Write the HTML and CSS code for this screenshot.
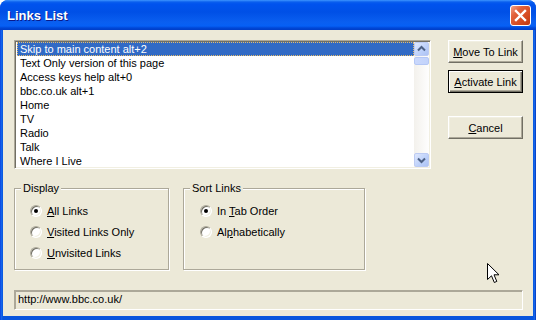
FILE: index.html
```html
<!DOCTYPE html>
<html lang="en">
<head>
    <meta charset="UTF-8">
    <title>Links List</title>
    <link rel="stylesheet" href="styles.css">
</head>
<body>
<div class="Window">
    <div class="TitleBar">
        <span class="TitleText">Links List</span>
        <button class="CloseButton" type="button">
            <svg width="19" height="19" viewBox="0 0 19 19">
                <path d="M5 5 L14 14 M14 5 L5 14" stroke="#fff" stroke-width="2.4" stroke-linecap="square" fill="none"/>
            </svg>
        </button>
    </div>
    <div class="Client">
        <div class="TopRow">
            <div class="ListBox">
                <ul class="LinkItems">
                    <li class="Selected">Skip to main content alt+2</li>
                    <li>Text Only version of this page</li>
                    <li>Access keys help alt+0</li>
                    <li>bbc.co.uk alt+1</li>
                    <li>Home</li>
                    <li>TV</li>
                    <li>Radio</li>
                    <li>Talk</li>
                    <li>Where I Live</li>
                </ul>
                <div class="ScrollBar">
                    <div class="ScrollButton">
                        <svg width="15" height="14" viewBox="0 0 15 14">
                            <path d="M4 8.5 L7.5 5 L11 8.5" stroke="#4d6185" stroke-width="2" fill="none"/>
                        </svg>
                    </div>
                    <div class="ScrollThumb"></div>
                    <div class="ScrollTrack"></div>
                    <div class="ScrollButton">
                        <svg width="15" height="14" viewBox="0 0 15 14">
                            <path d="M4 5.5 L7.5 9 L11 5.5" stroke="#4d6185" stroke-width="2" fill="none"/>
                        </svg>
                    </div>
                </div>
            </div>
            <div class="ButtonColumn">
                <button class="DialogButton" type="button"><u>M</u>ove To Link</button>
                <button class="DialogButton DefaultButton" type="button"><u>A</u>ctivate Link</button>
                <button class="DialogButton CancelButton" type="button"><u>C</u>ancel</button>
            </div>
        </div>
        <div class="GroupRow">
            <fieldset class="GroupBox DisplayGroup">
                <legend>Display</legend>
                <div class="RadioList">
                    <label class="RadioOption"><span class="Radio Checked"></span><span><u>A</u>ll Links</span></label>
                    <label class="RadioOption"><span class="Radio"></span><span><u>V</u>isited Links Only</span></label>
                    <label class="RadioOption"><span class="Radio"></span><span><u>U</u>nvisited Links</span></label>
                </div>
            </fieldset>
            <fieldset class="GroupBox SortGroup">
                <legend>Sort Links</legend>
                <div class="RadioList">
                    <label class="RadioOption"><span class="Radio Checked"></span><span>In <u>T</u>ab Order</span></label>
                    <label class="RadioOption"><span class="Radio"></span><span>Al<u>p</u>habetically</span></label>
                </div>
            </fieldset>
        </div>
        <div class="StatusField">http://www.bbc.co.uk/</div>
    </div>
    <!-- pointer sitting over the dialog -->
    <svg class="MouseCursor" width="13" height="21" viewBox="0 0 13 21">
        <path d="M0.5 0.5 L0.5 16.5 L4.5 12.8 L7.3 19.5 L9.8 18.4 L7 11.8 L12 11.8 Z" fill="#fff" stroke="#000" stroke-width="1"/>
    </svg>
</div>
</body>
</html>
```

FILE: styles.css
```css
body {
    margin: 0;
    background: #fff;
    font-family: "Liberation Sans", Arial, sans-serif;
    font-size: 11px;
}

.Window {
    position: relative;
    width: 536px;
    height: 320px;
    background: linear-gradient(90deg, #0831d9 0, #166aee 1px, #0855dd 3px, #0855dd 533px, #166aee 535px, #001ea0 536px);
    border-radius: 8px 8px 0 0;
    overflow: hidden;
}

.TitleBar {
    display: flex;
    align-items: flex-start;
    height: 30px;
    box-sizing: border-box;
    padding: 5px 5px 0 7px;
    background: linear-gradient(180deg, #3d95ff 0, #0a5fee 2px, #0053ee 4px, #0050e6 12px, #0a5ff0 22px, #0660f5 26px, #0047d6 28px, #003dc7 30px);
}

.TitleText {
    color: #fff;
    font-weight: bold;
    font-size: 13px;
    line-height: 21px;
    text-shadow: 1px 1px #0a1a8a;
}

.CloseButton {
    margin-left: auto;
    width: 21px;
    height: 21px;
    padding: 0;
    display: flex;
    align-items: center;
    justify-content: center;
    border: 1px solid #fff;
    border-radius: 3px;
    background: linear-gradient(135deg, #f2a48c 0, #e2623c 30%, #d64c22 65%, #c03810 100%);
}

.Client {
    height: 286px;
    margin: 0 3px;
    box-sizing: border-box;
    padding: 10px 0 0 11px;
    background: #ece9d8;
}

.TopRow {
    display: flex;
}

.ListBox {
    display: flex;
    width: 417px;
    height: 129px;
    box-sizing: border-box;
    border: 1px solid;
    border-color: #aca899 #fff #fff #aca899;
    box-shadow: inset 1px 1px #716f64, inset -1px -1px #f1efe2;
    padding: 1px;
    background: #fff;
}

.LinkItems {
    flex: 1;
    margin: 0;
    padding: 0 0 0 1px;
    list-style: none;
    overflow: hidden;
}

.LinkItems li {
    height: 12px;
    line-height: 12px;
    padding-left: 2px;
    border: 1px solid transparent;
    color: #000;
    white-space: nowrap;
}

.LinkItems li.Selected {
    background: #316ac5;
    color: #fff;
    border: 1px dotted #e4bb6a;
}

.ScrollBar {
    display: flex;
    flex-direction: column;
    width: 15px;
    background: linear-gradient(90deg, #f3f1ec, #fefefe);
}

.ScrollButton {
    height: 14px;
    box-sizing: border-box;
    border: 1px solid #bccbf3;
    border-radius: 2px;
    background: linear-gradient(135deg, #dfe8fd, #bcd0fa 60%, #adc3f4);
}

.ScrollButton svg {
    display: block;
    margin: -1px;
}

.ScrollThumb {
    height: 8px;
    margin-top: 1px;
    box-sizing: border-box;
    border: 1px solid #b4c7f5;
    border-radius: 2px;
    background: linear-gradient(90deg, #cad8fc, #c2d3fb);
}

.ScrollTrack {
    flex: 1;
}

.ButtonColumn {
    display: flex;
    flex-direction: column;
    margin-left: 17px;
}

.DialogButton {
    width: 75px;
    height: 23px;
    padding: 0;
    font-family: "Liberation Sans", Arial, sans-serif;
    font-size: 11px;
    color: #000;
    background: #ece9d8;
    border: 1px solid;
    border-color: #fff #716f64 #716f64 #fff;
    box-shadow: inset -1px -1px #aca899, inset 1px 1px #f1efe2;
}

.DialogButton.DefaultButton {
    margin-top: 7px;
    border: 1px solid #000;
    box-shadow: inset 1px 1px #fff, inset -1px -1px #716f64, inset -2px -2px #aca899;
}

.DialogButton.CancelButton {
    margin-top: 23px;
}

.GroupRow {
    display: flex;
    gap: 14px;
    margin-top: 13px;
}

.GroupBox {
    margin: 0;
    height: 88px;
    box-sizing: border-box;
    padding: 5px 0 0 0;
    border: 1px solid #aca899;
    box-shadow: inset 1px 1px #fff, 1px 1px #fff;
}

.GroupBox legend {
    padding: 0 2px;
    margin-left: 6px;
    line-height: 13px;
    background: #ece9d8;
    color: #000;
}

.DisplayGroup {
    width: 155px;
}

.DisplayGroup .RadioList {
    padding-left: 15px;
}

.SortGroup {
    width: 182px;
}

.SortGroup .RadioList {
    padding-left: 16px;
}

.RadioOption {
    display: flex;
    align-items: center;
    height: 21px;
    color: #000;
}

.Radio {
    position: relative;
    width: 12px;
    height: 12px;
    box-sizing: border-box;
    margin-right: 5px;
    border-radius: 50%;
    border: 1px solid;
    border-color: #aca899 #fff #fff #aca899;
    background: #fff;
    box-shadow: inset 1px 1px #716f64, inset -1px -1px #f1efe2;
}

.Radio.Checked::after {
    content: "";
    position: absolute;
    left: 3px;
    top: 3px;
    width: 4px;
    height: 4px;
    border-radius: 50%;
    background: #000;
}

.StatusField {
    width: 509px;
    height: 20px;
    box-sizing: border-box;
    margin-top: 20px;
    padding-left: 3px;
    line-height: 17px;
    border: 1px solid;
    border-color: #aca899 #fff #fff #aca899;
    box-shadow: inset 1px 1px #aca899;
    color: #000;
}

.MouseCursor {
    position: absolute;
    left: 487px;
    top: 263px;
}
```
